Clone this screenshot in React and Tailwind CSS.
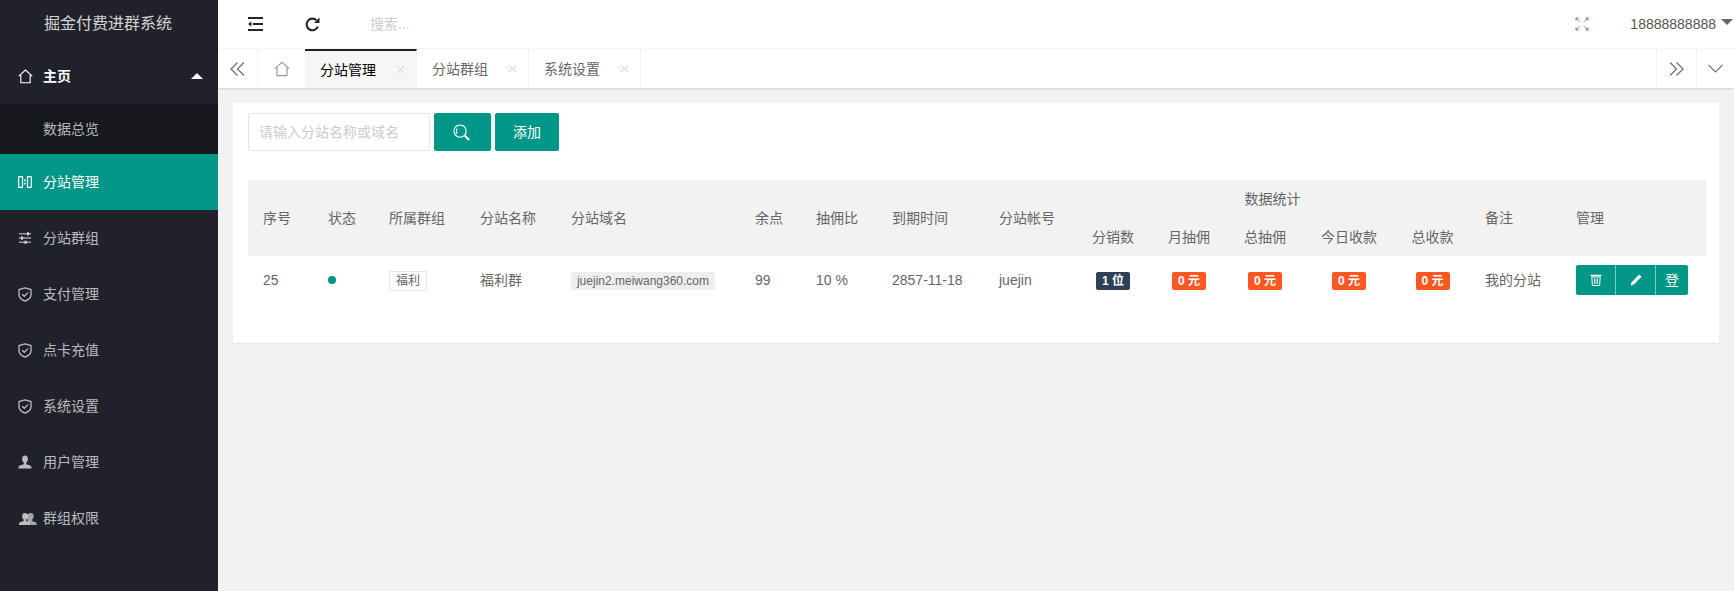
import { X } from "lucide-react";

const font = "font-['Liberation_Sans','Noto_Sans_CJK_SC',sans-serif]";

function HomeIcon({ className }) {
    return (
        <svg viewBox="0 0 16 16" className={className} fill="none" stroke="currentColor" strokeWidth="1.2">
            <path d="M0.8 7.6 8 1.2l7.2 6.4M3 6.4v8.2h10V6.4" />
        </svg>
    );
}

function ComponentIcon({ className }) {
    return (
        <svg viewBox="0 0 14 14" className={className} fill="none" stroke="currentColor" strokeWidth="1.2">
            <rect x="0.7" y="1.6" width="3.8" height="10.8" rx="0.5" />
            <rect x="9.5" y="1.6" width="3.8" height="10.8" rx="0.5" />
            <path d="M7 4.6v1.6M7 7.8v1.6" strokeWidth="1.5" />
        </svg>
    );
}

function SliderIcon({ className }) {
    return (
        <svg viewBox="0 0 14 14" className={className} fill="currentColor">
            <rect x="1" y="2.2" width="12" height="1.2" />
            <rect x="1" y="6.4" width="12" height="1.2" />
            <rect x="1" y="10.6" width="12" height="1.2" />
            <rect x="9" y="1" width="2" height="3.6" rx="0.5" />
            <rect x="3" y="5.2" width="2" height="3.6" rx="0.5" />
            <rect x="6.5" y="9.4" width="2" height="3.6" rx="0.5" />
        </svg>
    );
}

function ShieldIcon({ className }) {
    return (
        <svg viewBox="0 0 14 15" className={className} fill="none" stroke="currentColor" strokeWidth="1.3">
            <path d="M7 0.9 13 2.6v5.2c0 3-2.8 5.2-6 6.3-3.2-1.1-6-3.3-6-6.3V2.6z" />
            <path d="M4.2 7.2 6.3 9.3 9.9 5.6" />
        </svg>
    );
}

function UserIcon({ className }) {
    return (
        <svg viewBox="0 0 14 14" className={className} fill="currentColor">
            <path d="M7 0.5c1.9 0 2.9 1.4 2.9 3.3 0 1.7-.8 3.2-1.7 4v1.4c1.9.7 5.3 1.100 5.300 3.300v1h-13v-1c0-2.200 3.400-2.600 5.300-3.300V7.800c-.9-.8-1.700-2.300-1.700-4C4.100 1.900 5.100.5 7 .5z" />
        </svg>
    );
}

function UsersIcon({ className }) {
    return (
        <svg viewBox="0 0 18 14" className={className} fill="currentColor">
            <path d="M12 1c1.700 0 2.700 1.300 2.700 3 0 1.500-.6 2.900-1.500 3.600v1.400c1.500.6 4.500.9 4.500 2.800v1.200h-6c-.2-2-1.800-2.600-3.200-3.200V7.600C7.600 6.900 7 5.500 7 4c0-1.700 3.300-3 5-3z" opacity="0.85" />
            <path d="M5.800 1c1.700 0 2.700 1.300 2.700 3 0 1.500-.6 2.900-1.500 3.600v1.400c1.500.6 4.300.9 4.300 2.800v1.200H0v-1.200c0-1.900 3.400-2.200 4.600-2.800V7.600C3.700 6.900 3.100 5.500 3.100 4c0-1.700 1-3 2.700-3z" />
        </svg>
    );
}

function ShrinkIcon() {
    return (
        <svg viewBox="0 0 15 14" className="w-[15px] h-[14px] text-[#21212b]" fill="currentColor">
            <rect x="0" y="0" width="15" height="2" />
            <rect x="5" y="6" width="10" height="2" />
            <rect x="0" y="12" width="15" height="2" />
            <path d="M3.500 4.500v5L0 7z" />
        </svg>
    );
}

function RefreshIcon() {
    return (
        <svg viewBox="0 0 15 15" className="w-[15px] h-[15px] text-[#21212b]" fill="none" stroke="currentColor" strokeWidth="2.100">
            <path d="M12.800 9.600A5.800 5.800 0 1 1 11.400 3.200" />
            <path d="M14.500 0.500v5.500h-5.500z" fill="currentColor" stroke="none" />
        </svg>
    );
}

function DoubleArrow({ dir }) {
    return (
        <svg viewBox="0 0 15 14" className="w-[15px] h-[14px] text-[#777]" fill="none" stroke="currentColor" strokeWidth="1.400">
            {dir === "left" ? <path d="M7.500 0.500 1 7l6.500 6.500M14 0.500 7.500 7l6.500 6.500" /> : <path d="M1 .5 7.500 7 1 13.500M7.500.5 14 7l-6.500 6.500" />}
        </svg>
    );
}

function FullIcon() {
    return (
        <svg viewBox="0 0 14 14" className="w-[14px] h-[14px] text-[#5f7f9a]" fill="none" stroke="currentColor" strokeWidth="1">
            <path d="M1 1 4.500 4.500M1 3.500V1h2.500M13 1 9.500 4.500M10.500 1H13v2.500M1 13l3.500-3.500M1 10.500V13h2.500M13 13 9.500 9.500M13 10.500V13h-2.500" />
        </svg>
    );
}

function Tab({ text, active }) {
    return (
        <div className={`relative w-[112px] h-full flex items-center border-r border-[#f0f0f0] pl-[15px] text-sm ${active ? 'bg-[#f6f6f6] text-black border-t-2 border-t-[#21212b]' : 'text-[#666]'}`}>
            <span className="w-[56px]">{text}</span>
            <X className="ml-[18px] w-[13px] h-[13px] text-[#c8c8c8]" strokeWidth={1.600} />
        </div>
    );
}

const navItems = [
    { text: "分站管理", icon: ComponentIcon, size: "w-[14px] h-[14px]", active: true },
    { text: "分站群组", icon: SliderIcon, size: "w-[14px] h-[14px]" },
    { text: "支付管理", icon: ShieldIcon, size: "w-[14px] h-[15px]" },
    { text: "点卡充值", icon: ShieldIcon, size: "w-[14px] h-[15px]" },
    { text: "系统设置", icon: ShieldIcon, size: "w-[14px] h-[15px]" },
    { text: "用户管理", icon: UserIcon, size: "w-[14px] h-[14px]" },
    { text: "群组权限", icon: UsersIcon, size: "w-[18px] h-[14px] ml-[1px] mt-[1px]" },
];

const colWidths = ["w-[65px]", "w-[61px]", "w-[91px]", "w-[91px]", "w-[184px]", "w-[61px]", "w-[76px]", "w-[107px]", "w-[91px]", "w-[76px]", "w-[76px]", "w-[76px]", "w-[92px]", "w-[75px]", "w-[91px]", "w-[145px]"];

const mainHead = ["序号", "状态", "所属群组", "分站名称", "分站域名", "余点", "抽佣比", "到期时间", "分站帐号"];
const subHead = ["分销数", "月抽佣", "总抽佣", "今日收款", "总收款"];

function Badge({ text, dark }) {
    return (
        <span className={`inline-flex items-center justify-center w-[34px] h-[18px] rounded-[2px] text-xs font-bold text-white ${dark ? 'bg-[#2f4056]' : 'bg-[#ff5722]'}`}>{text}</span>
    );
}

export default function App() {
    return (
        <div className={`flex h-screen w-full overflow-hidden bg-[#f2f2f2] ${font}`}>
            <aside className="w-[218px] shrink-0 bg-[#21212b] text-white/70 text-sm">
                <div className="h-[48px] flex items-center justify-center pr-[2px] text-base text-white/80">掘金付费进群系统</div>
                <div className="relative h-[56px] flex items-center pl-[18px] text-white font-bold">
                    <HomeIcon className="w-[15px] h-[15px] mr-[10px]" />
                    主页
                    <span className="absolute right-[15px] top-[25px] border-x-[6px] border-x-transparent border-b-[6px] border-b-white" />
                </div>
                <div className="h-[50px] flex items-center pl-[43px] bg-[#17171e]">数据总览</div>
                {navItems.map((item) => (
                    <div key={item.text} className={`h-[56px] flex items-center pl-[18px] ${item.active ? 'bg-[#009688] text-white' : ''}`}>
                        <span className="w-[25px] shrink-0 flex">
                            <item.icon className={item.size} />
                        </span>
                        {item.text}
                    </div>
                ))}
            </aside>

            <main className="flex-1 min-w-0 flex flex-col">
                <header className="h-[48px] bg-white flex items-center text-sm text-[#666]">
                    <div className="ml-[30px]"><ShrinkIcon /></div>
                    <div className="ml-[42px]"><RefreshIcon /></div>
                    <div className="ml-[50px] text-[#ccc]">搜索...</div>
                    <div className="ml-auto"><FullIcon /></div>
                    <div className="ml-[41px] mr-[18px] text-[#555]">18888888888</div>
                    <span className="absolute right-[1px] top-[19px] border-x-[6px] border-x-transparent border-t-[6px] border-t-[#666]" />
                </header>

                <div className="h-[40px] bg-white flex items-stretch border-t border-[#f6f6f6] shadow-[0_1px_2px_0_rgba(0,0,0,0.15)] relative">
                    <div className="w-[40px] flex items-center justify-center border-r border-[#f0f0f0]"><DoubleArrow dir="left" /></div>
                    <div className="w-[47px] flex items-center justify-center"><HomeIcon className="w-[16px] h-[16px] text-[#999]" /></div>
                    <Tab text="分站管理" active />
                    <Tab text="分站群组" />
                    <Tab text="系统设置" />
                    <div className="ml-auto w-[40px] flex items-center justify-center border-l border-[#f0f0f0]"><DoubleArrow dir="right" /></div>
                    <div className="w-[38px] flex items-center justify-center border-l border-[#f0f0f0]">
                        <svg viewBox="0 0 15 9" className="w-[15px] h-[9px] text-[#777]" fill="none" stroke="currentColor" strokeWidth="1.100">
                            <path d="M.5 1 7.500 8l7-7" />
                        </svg>
                    </div>
                </div>

                <div className="p-[15px]">
                    <div className="bg-white rounded-[2px] shadow-[0_1px_2px_0_rgba(0,0,0,0.05)] px-[15px] pt-[10px] pb-[39px]">
                        <div className="flex gap-[4px] mb-[29px]">
                            <input readOnly placeholder="请输入分站名称或域名" className="w-[182px] h-[38px] border border-[#e6e6e6] rounded-[2px] px-[10px] text-sm placeholder:text-[#ccc] outline-none" />
                            <button className="w-[57px] h-[38px] bg-[#009688] rounded-[2px] flex items-center justify-center text-white">
                                <svg viewBox="0 0 18 18" className="w-[17px] h-[17px] -ml-[2px]" fill="none" stroke="currentColor" strokeWidth="1.200">
                                    <circle cx="7.500" cy="7.500" r="6.500" />
                                    <path d="M4.300 10.500c-1-1.800-1-3.900 0-5.700" />
                                    <path d="M12.500 12.500 17 17" strokeWidth="2.200" />
                                </svg>
                            </button>
                            <button className="w-[64px] h-[38px] bg-[#009688] rounded-[2px] text-sm text-white">添加</button>
                        </div>

                        <table className="w-[1458px] table-fixed border-collapse text-sm text-[#666]">
                            <colgroup>
                                {colWidths.map((w, i) => <col key={i} className={w} />)}
                            </colgroup>
                            <thead className="bg-[#f2f2f2] font-normal">
                                <tr className="h-[38px]">
                                    {mainHead.map((h) => (
                                        <th key={h} rowSpan={2} className="font-normal text-left pl-[15px]">{h}</th>
                                    ))}
                                    <th colSpan={5} className="font-normal text-center">数据统计</th>
                                    <th rowSpan={2} className="font-normal text-left pl-[15px]">备注</th>
                                    <th rowSpan={2} className="font-normal text-left pl-[15px]">管理</th>
                                </tr>
                                <tr className="h-[38px]">
                                    {subHead.map((h) => (
                                        <th key={h} className="font-normal text-center">{h}</th>
                                    ))}
                                </tr>
                            </thead>
                            <tbody>
                                <tr className="h-[48px]">
                                    <td className="pl-[15px]">25</td>
                                    <td className="pl-[15px]"><span className="block w-[8px] h-[8px] rounded-full bg-[#009688]" /></td>
                                    <td className="pl-[15px]"><span className="inline-flex items-center justify-center w-[38px] h-[20px] border border-[#e6e6e6] text-xs">福利</span></td>
                                    <td className="pl-[15px]">福利群</td>
                                    <td className="pl-[15px]"><span className="inline-flex items-center justify-center w-[144px] h-[18px] rounded-[2px] bg-[#eee] text-xs">juejin2.meiwang360.com</span></td>
                                    <td className="pl-[15px]">99</td>
                                    <td className="pl-[15px]">10 %</td>
                                    <td className="pl-[15px]">2857-11-18</td>
                                    <td className="pl-[15px]">juejin</td>
                                    <td className="text-center"><Badge text="1 位" dark /></td>
                                    <td className="text-center"><Badge text="0 元" /></td>
                                    <td className="text-center"><Badge text="0 元" /></td>
                                    <td className="text-center"><Badge text="0 元" /></td>
                                    <td className="text-center"><Badge text="0 元" /></td>
                                    <td className="pl-[15px]">我的分站</td>
                                    <td className="pl-[15px]">
                                        <div className="flex w-[112px] h-[30px] bg-[#009688] rounded-[2px] text-white text-xs">
                                            <div className="w-[40px] flex items-center justify-center border-r border-white/50">
                                                <svg viewBox="0 0 12 12" className="w-[12px] h-[12px]" fill="none" stroke="currentColor" strokeWidth="1">
                                                    <path d="M.5 1.500h11" strokeWidth="1.500" />
                                                    <path d="M1.800 3h8.400l-.6 8.500H2.400z" />
                                                    <path d="M4.500 4.500v5.500M6 4.500v5.500M7.500 4.500v5.500" strokeWidth="0.800" />
                                                </svg>
                                            </div>
                                            <div className="w-[40px] flex items-center justify-center border-r border-white/50">
                                                <svg viewBox="0 0 12 12" className="w-[12px] h-[12px]" fill="currentColor">
                                                    <path d="M9.300.5 11.500 2.700 3.800 10.400.6 11.400l1-3.200z" />
                                                </svg>
                                            </div>
                                            <div className="w-[32px] flex items-center justify-center text-sm">登</div>
                                        </div>
                                    </td>
                                </tr>
                            </tbody>
                        </table>
                    </div>
                </div>
            </main>
        </div>
    );
}
